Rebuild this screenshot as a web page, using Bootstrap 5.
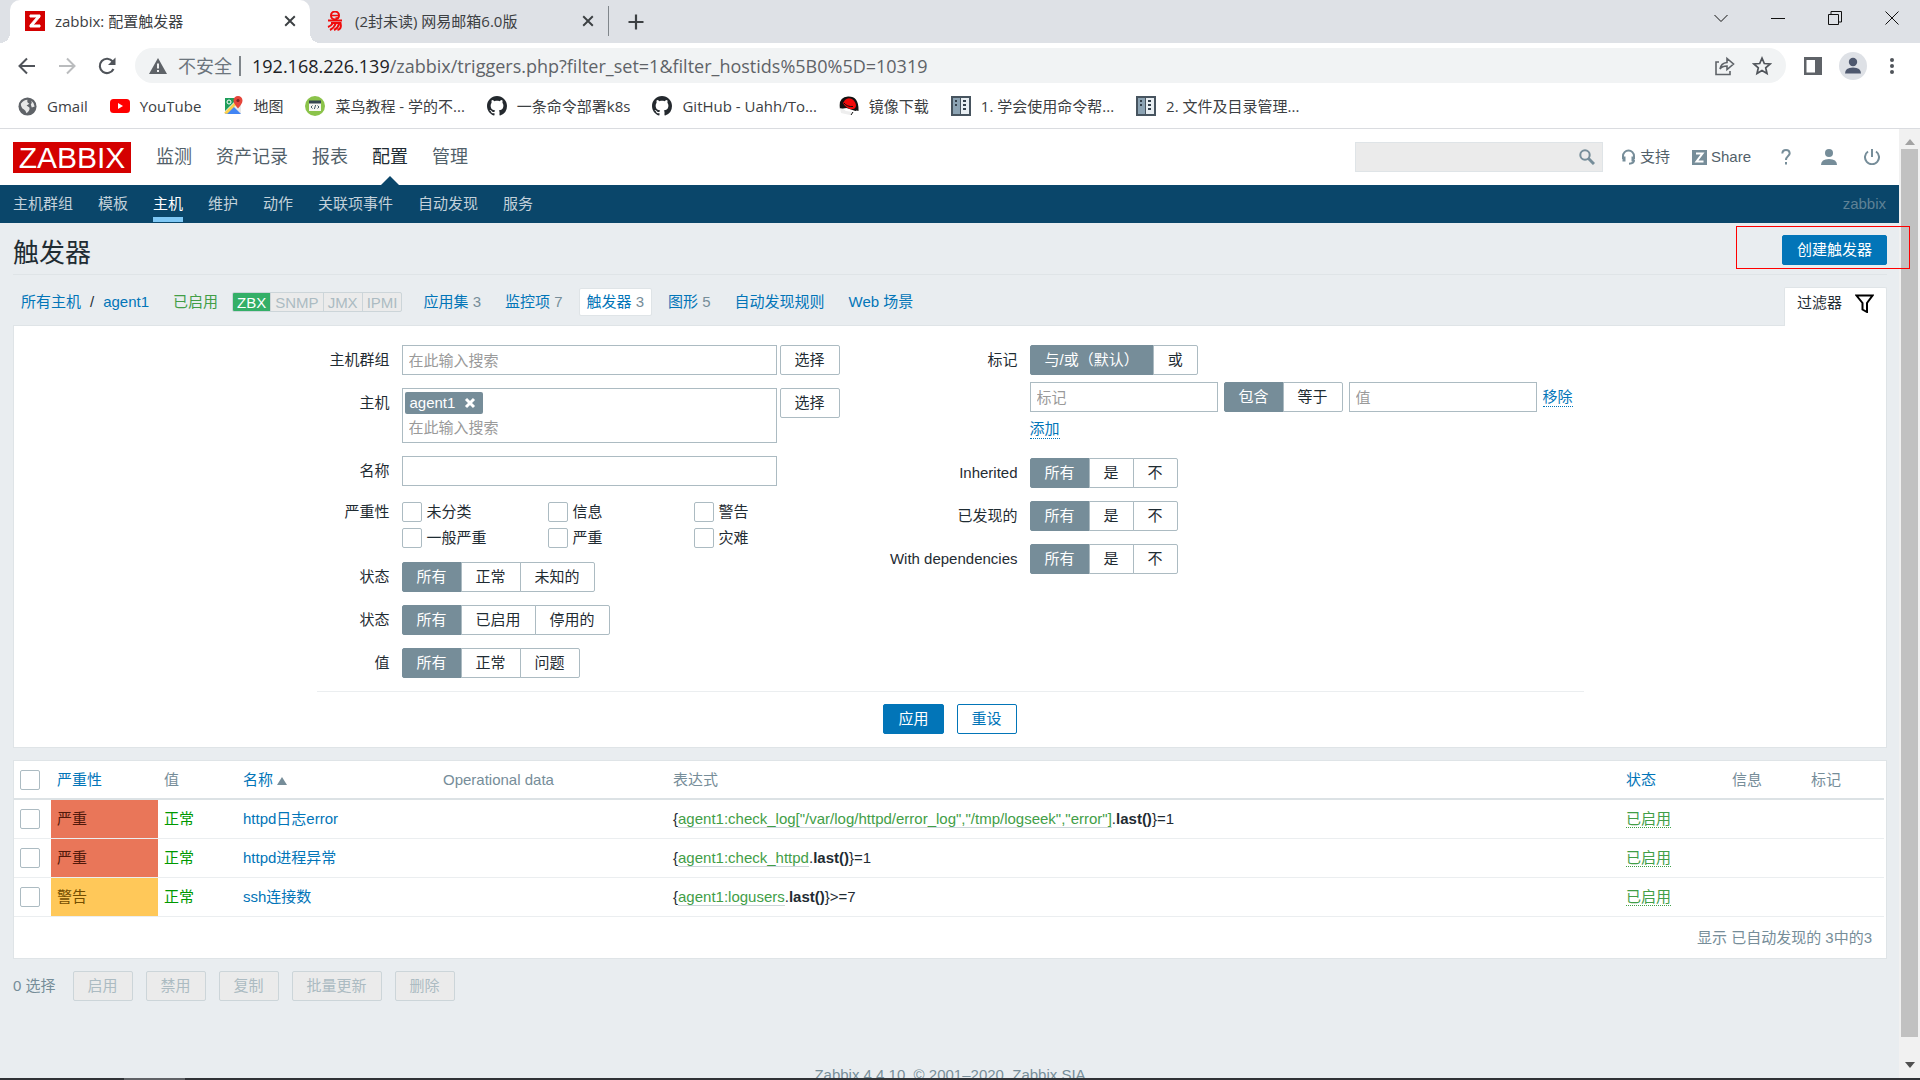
<!DOCTYPE html>
<html lang="zh-CN">
<head>
<meta charset="utf-8">
<meta name="viewport" content="width=device-width, initial-scale=1">
<title>zabbix: 配置触发器</title>
<link href="https://cdn.jsdelivr.net/npm/bootstrap@5.3.0/dist/css/bootstrap.min.css" rel="stylesheet">
<style>
:root{--zlink:#0275b8;--zgrey:#768d99;--zline:#dfe4e7;--zedge:#acbbc2;--zbg:#ebeef0}
body{font-family:"Liberation Sans","Noto Sans CJK SC",sans-serif;font-size:15px;line-height:20px;color:#1f2c33;background:#e9edf0}
a{color:var(--zlink);text-decoration:none}
svg{display:block;flex:none}
.window{height:100vh;overflow:hidden}
.chrome{font-family:"Open Sans","Noto Sans CJK SC",sans-serif;color:#3c4043;background:#fff}
.chrome button,.plain{border:0;background:none;padding:0;display:flex;align-items:center;justify-content:center;color:#3c4043}
.tabstrip{height:43px;background:#dee1e6;padding-left:10px}
.btab{width:300px;height:43px;padding:0 14px 2px 15px;gap:10px}
.btab.on{background:#fff;border-radius:10px 10px 0 0;position:relative}
.btab.on::before,.btab.on::after{content:"";position:absolute;bottom:0;width:10px;height:10px}
.btab.on::before{left:-10px;background:radial-gradient(circle at 0 0,#dee1e6 10px,#fff 10px)}
.btab.on::after{right:-10px;background:radial-gradient(circle at 100% 0,#dee1e6 10px,#fff 10px)}
.tabsep{width:1px;height:30px;background:#80868b;margin-top:6px}
.winbtns button{width:57px;height:36px;color:#111}
.toolbar{height:45px}
.toolbar .nav-i{width:40px}
.omni{height:35px;border-radius:18px;background:#f1f3f4;font-size:18px}
.marks{height:41px;border-bottom:1px solid #dadce0;padding:0 0 4px 18px;gap:22px}
.marks a{color:#3c4043;gap:10px;white-space:nowrap}
.page{min-height:0;overflow:hidden}
.content{min-width:0;position:relative;z-index:1}
.sbar{flex:0 0 21px;background:#f1f1f1;padding:10px 0}
.thumb{width:17px;background:#c1c1c1;flex:0 0 888px}
.topbar{height:56px;background:#fff;padding:0 13px}
.logo{background:#d40000;color:#fff;font-size:30px;line-height:31px;height:31px;width:118px;text-align:center}
.mainnav{gap:24px;font-size:18px;margin-left:25px}
.mainnav a{color:#52616a;line-height:56px;position:relative}
.mainnav a.on{color:#1f2c33}
.mainnav a.on::after{content:"";position:absolute;left:50%;bottom:0;margin-left:-9px;border:9px solid transparent;border-top:0;border-bottom-color:#0a466a}
.search{width:248px;height:30px;background:#ebebeb;border:1px solid #dfe4e7;padding-right:7px}
.search input{border:0;background:none;outline:0;min-width:0}
.tools{color:var(--zgrey)}
.tools a{color:#52616a}
.subnav{height:38px;background:#0a466a;padding:0 13px;gap:25px}
.subnav a{color:#c3d1da;line-height:26px;border-bottom:5px solid transparent;margin-bottom:1px}
.subnav a.on{color:#fff;border-color:#7fc8f5}
.subnav span{color:#5f8296}
.work{padding:0 12px 0 13px}
.headline{height:52px;border-bottom:1px solid var(--zline)}
.headline h1{font-size:26px;line-height:36px;margin:0;padding-top:12px}
.zbtn{height:30px;padding:0 14px;border:1px solid var(--zedge);border-radius:2px;background:#fff;color:#1f2c33;font-size:15px;line-height:28px;white-space:nowrap}
.zbtn.blue{background:var(--zlink);border-color:var(--zlink);color:#fff}
.zbtn.ghost{color:var(--zlink);border-color:var(--zlink)}
.zbtn:disabled{background:#ebebeb;border-color:#ccd5d9;color:#acbbc2}
.callout-box{position:absolute;right:-23px;top:3px;width:174px;height:43px;border:1px solid #f00}
.crumbs{height:50px;padding-left:8px}
.crumbs .hl{background:#fff;border:1px solid var(--zline);border-radius:2px;padding:3px 7px}
.crumbs small{font-size:15px;color:var(--zgrey)}
.ifaces{height:20px;border:1px solid #ccd5d9;border-radius:2px;overflow:hidden;color:#acbbc2;background:#ebebeb;line-height:19px}
.ifaces span{padding:0 4px;border-left:1px solid #ccd5d9}
.ifaces span:first-child{background:#34af67;color:#fff;border:0}
.ftab{height:39px;width:103px;background:#fff;border:1px solid var(--zline);border-bottom:0;margin-bottom:-1px;border-radius:2px 2px 0 0;color:#1f2c33;padding:0 12px;position:relative}
.panel{background:#fff;border:1px solid var(--zline)}
.filter{padding:19px 0 13px}
.fgrid{max-width:1267px}
.fleft{width:560px}
.frow{display:flex;gap:12px}
.frow>.lab{line-height:30px;text-align:right;flex:none;white-space:nowrap}
.fleft .lab{width:73px}
.fright .lab{width:141px}
.fstack{display:flex;flex-direction:column;gap:13px}
.zin{height:30px;border:1px solid var(--zedge);padding:0 6px;background:#fff;outline:0;color:#1f2c33;font-size:15px}
.wide{width:375px}
.mid{width:188px}
input::placeholder{color:#9a9a9a;opacity:1}
.multi{border:1px solid var(--zedge);padding:3px 2px;height:55px}
.multi input{border:0;outline:0;padding:0 4px;height:26px;width:100%}
.chip{background:var(--zgrey);color:#fff;border-radius:2px;height:22px;padding:0 5px;gap:9px;width:78px}
.zseg{display:flex}
.zseg label{border:1px solid var(--zedge);padding:0 14px;line-height:28px;height:30px;background:#fff;margin-left:-1px;cursor:pointer;white-space:nowrap}
.zseg label:first-of-type{margin-left:0;border-radius:2px 0 0 2px}
.zseg label:last-of-type{border-radius:0 2px 2px 0}
.zseg .btn-check:checked+label{background:var(--zgrey);border-color:var(--zgrey);color:#fff}
.sevs{display:grid;grid-template-columns:repeat(3,146px);row-gap:6px;padding:3px 0 1px}
.sevs label{display:flex;gap:5px}
.form-check-input{width:20px;height:20px;margin:0;border:1px solid var(--zedge);border-radius:2px!important;flex:none;display:block}
.dotted{border-bottom:1px dotted currentColor;line-height:18px}
.factions{border-top:1px solid var(--zbg);margin-top:13px;padding-top:12px;gap:13px}
.ztable{table-layout:fixed;margin:0;width:calc(100% - 2px);color:#1f2c33}
.ztable th{font-weight:400;color:var(--zgrey);border-bottom:2px solid #dce2e5;padding:0 6px;height:38px;vertical-align:middle}
.ztable td{padding:0 6px;height:39px;border-bottom:1px solid var(--zbg);white-space:nowrap}
.ztable>:not(caption)>*>*{background-color:transparent;box-shadow:none}
.ztable td.high{background:#e97659;background-clip:padding-box;color:#52190b}
.ztable td.warning{background:#ffc859;background-clip:padding-box;color:#734d00}
.ok{color:#090}
.grn{color:#429e47}
.ztable .item{color:#429e47;border-bottom:1px solid #ccd5d9}
.tfoot-line{height:41px;line-height:41px;padding-right:14px;color:var(--zgrey)}
.bulk{gap:13px;margin-top:12px;color:var(--zgrey)}
.foot{color:var(--zgrey);margin-top:64px;text-align:center;white-space:pre}
.taskbar{height:2px;background:#303236;flex:none;padding-left:124px}
.taskbar i{display:block;width:61px;height:2px;background:#606266}
</style>
<script src="https://cdn.jsdelivr.net/npm/bootstrap@5.3.0/dist/js/bootstrap.bundle.min.js"></script>
</head>
<body>
<svg width="0" height="0" class="position-absolute" aria-hidden="true">
<symbol id="gh" viewBox="0 0 16 16"><path d="M8 0C3.58 0 0 3.58 0 8c0 3.54 2.29 6.53 5.47 7.59.4.07.55-.17.55-.38 0-.19-.01-.82-.01-1.49-2.01.37-2.53-.49-2.69-.94-.09-.23-.48-.94-.82-1.13-.28-.15-.68-.52-.01-.53.63-.01 1.08.58 1.23.82.72 1.21 1.87.87 2.33.66.07-.52.28-.87.51-1.07-1.78-.2-3.64-.89-3.64-3.95 0-.87.31-1.59.82-2.15-.08-.2-.36-1.02.08-2.12 0 0 .67-.21 2.2.82.64-.18 1.32-.27 2-.27s1.36.09 2 .27c1.53-1.04 2.2-.82 2.2-.82.44 1.1.16 1.92.08 2.12.51.56.82 1.27.82 2.15 0 3.07-1.87 3.75-3.65 3.95.29.25.54.73.54 1.48 0 1.07-.01 1.93-.01 2.2 0 .21.15.46.55.38A8.01 8.01 0 0 0 16 8c0-4.42-3.58-8-8-8z" fill="#24292e"/></symbol>
<symbol id="bk" viewBox="0 0 20 20"><path d="M0 0h20v20H0z" fill="#47545f"/><path d="M2 2h7v16H2z" fill="#8ca3b3"/><path d="M10 2h8v16h-8z" fill="#e8eef2"/><path d="M4 4h2v2H4zM4 8h2v2H4zM12 4h3v2h-3zM12 8h3v2h-3zM12 12h3v2h-3z" fill="#34414c"/></symbol>
<symbol id="xx" viewBox="0 0 10 10"><path d="M1 1l8 8M9 1L1 9" stroke="currentColor" stroke-width="1.6"/></symbol>
</svg>
<div class="window d-flex flex-column">
<header class="chrome">
  <div class="tabstrip d-flex">
    <div class="btab on d-flex align-items-center">
      <svg width="20" height="20" viewBox="0 0 20 20"><path d="M0 0h20v20H0z" fill="#d40000"/><path d="M5 4h10v2L8 14h7v2H5v-2l7-8H5z" fill="#fff" stroke="#fff"/></svg>
      <span class="flex-fill">zabbix: 配置触发器</span>
      <button aria-label="关闭"><svg width="12" height="12"><use href="#xx"/></svg></button>
    </div>
    <div class="btab d-flex align-items-center" style="width:298px">
      <svg width="20" height="20" viewBox="0 0 18 20" fill="none" stroke="#f00b0b" stroke-width="2"><circle cx="9" cy="4.500" r="4"/><path d="M6 4.500h6M9.500 7h3" stroke-width="1.400"/><path d="M2 9.500h14M5 12h9.500q1.500 6-3 7M7 12q-2 3-5 4M10 12q-2 5-6 7M13 13q-1 4-5 6"/></svg>
      <span class="flex-fill">(2封未读) 网易邮箱6.0版</span>
      <button aria-label="关闭"><svg width="12" height="12"><use href="#xx"/></svg></button>
    </div>
    <div class="tabsep"></div>
    <button class="ms-3" aria-label="新标签页"><svg width="22" height="22" viewBox="0 0 22 22"><path d="M11 3.500v15M3.500 11h15" stroke="currentColor" stroke-width="2.200"/></svg></button>
    <div class="winbtns d-flex ms-auto">
      <button aria-label="搜索标签页"><svg width="14" height="14" viewBox="0 0 14 14" fill="none" stroke="currentColor"><path d="M.5 4L7 10.500 13.500 4"/></svg></button>
      <button aria-label="最小化"><svg width="14" height="14"><path d="M0 7.500h14" stroke="#111"/></svg></button>
      <button aria-label="还原"><svg width="14" height="14" fill="none" stroke="#111"><path d="M.5 3.500h10v10H.5zM3 3V.5h10.500v10.500H11"/></svg></button>
      <button aria-label="关闭窗口"><svg width="14" height="14"><path d="M.5.5l13 13M13.500.5l-13 13" stroke="#111"/></svg></button>
    </div>
  </div>
  <div class="toolbar d-flex align-items-center" style="padding-left:7px">
    <button class="nav-i" aria-label="后退"><svg width="18" height="18" viewBox="0 0 18 18" fill="none" stroke="#50545a" stroke-width="2"><path d="M17 9H2M9 1.500L1.500 9 9 16.500"/></svg></button>
    <button class="nav-i" aria-label="前进"><svg width="18" height="18" viewBox="0 0 18 18" fill="none" stroke="#babcbe" stroke-width="2"><path d="M1 9h15M9 1.500L16.500 9 9 16.500"/></svg></button>
    <button class="nav-i" aria-label="刷新"><svg width="20" height="20" viewBox="0 0 20 20"><path d="M16.500 13a7.200 7.200 0 1 1-.8-7.500" fill="none" stroke="#50545a" stroke-width="2.100"/><path d="M18.500 1.500V9H11z" fill="#50545a"/></svg></button>
    <div class="omni d-flex align-items-center flex-fill ms-2" style="padding:0 14px">
      <svg width="18" height="16" viewBox="0 0 18 16"><path d="M9 0l9 16H0z" fill="#5f6368"/><path d="M9 5.500v5M9 12v2" stroke="#fff" stroke-width="1.800"/></svg>
      <span class="text-secondary" style="margin-left:11px">不安全</span>
      <span style="width:2px;height:20px;background:#80868b;margin:0 8px 0 7px"></span>
      <span class="flex-fill" style="color:#5f6368;padding-left:3px"><span style="color:#202124">192.168.226.139</span>/zabbix/triggers.php?filter_set=1&amp;filter_hostids%5B0%5D=10319</span>
      <button aria-label="分享" class="me-3"><svg width="22" height="20" viewBox="0 0 22 20" fill="none" stroke="#5f6368" stroke-width="1.600"><path d="M5 6H2v12.500h14V15M6 13q1-6 7-6.500V2.500L19.500 8 13 13.500V10q-5 0-7 3z"/></svg></button>
      <button aria-label="收藏"><svg width="20" height="20" viewBox="0 0 20 20" fill="none" stroke="#50545a" stroke-width="1.700"><path d="M10 2.200l2.300 5.300 5.800.5-4.400 3.800 1.300 5.700-5-3-5 3 1.300-5.700L1.900 8l5.800-.5z"/></svg></button>
    </div>
    <button aria-label="侧边栏" style="margin-left:18px"><svg width="18" height="18"><path d="M0 0h18v18H0zM2.500 3v12.500H11V3z" fill="#5f6368" fill-rule="evenodd"/></svg></button>
    <button aria-label="用户" style="margin-left:17px"><svg width="28" height="28"><circle cx="14" cy="14" r="14" fill="#dee1e6"/><circle cx="14" cy="10" r="4.200" fill="#4e586e"/><path d="M6 21.500q0-6 8-6t8 6z" fill="#4e586e"/></svg></button>
    <button aria-label="菜单" style="margin:0 26px 0 23px"><svg width="4" height="18" fill="#50545a"><circle cx="2" cy="3" r="2"/><circle cx="2" cy="9" r="2"/><circle cx="2" cy="15" r="2"/></svg></button>
  </div>
  <nav class="marks d-flex align-items-center" aria-label="书签">
    <a class="d-flex align-items-center" href="#"><svg width="19" height="19" viewBox="0 0 20 20"><circle cx="10" cy="10" r="9.500" fill="#5f6368"/><path d="M3 7q3-4 7-4-1 3 2 4l-3 2 3 2q1 3-3 6-1-3-3-4-3-2-3-6zM14 4q3 2 3.500 6l-3 1-1-3 1-2z" fill="#fff" opacity=".85"/></svg>Gmail</a>
    <a class="d-flex align-items-center" href="#"><svg width="20" height="20"><rect y="3" width="20" height="14" rx="3.500" fill="#f00"/><path d="M8 7v6l5-3z" fill="#fff"/></svg>YouTube</a>
    <a class="d-flex align-items-center" href="#"><svg width="20" height="20"><path d="M2 2h16v16H2z" fill="#e9e9e9"/><path d="M2 2h13L2 15z" fill="#1e9e5a"/><path d="M2 18l8-8 8 8z" fill="#4285f4"/><path d="M1 17L14 4l2 2L4 18z" fill="#fbd04b"/><path d="M15 0a4.500 4.500 0 0 1 4.500 4.500q0 3-4.500 8-4.500-5-4.500-8A4.500 4.500 0 0 1 15 0z" fill="#e5453a"/><circle cx="15" cy="4.500" r="1.600" fill="#822"/><circle cx="6" cy="6" r="2" fill="none" stroke="#fff"/></svg>地图</a>
    <a class="d-flex align-items-center" href="#"><svg width="20" height="20"><circle cx="10" cy="10" r="10" fill="#8bc34a"/><path d="M4 5h12v10H4z" fill="#f5f5f0"/><path d="M4 4.500h12v3H4z" fill="#37474f"/><path d="M7.500 9.500L6 11l1.500 1.500M12.500 9.500L14 11l-1.500 1.500M10.600 9l-1.200 4" stroke="#455a64" fill="none"/></svg>菜鸟教程 - 学的不...</a>
    <a class="d-flex align-items-center" href="#"><svg width="20" height="20"><use href="#gh"/></svg>一条命令部署k8s</a>
    <a class="d-flex align-items-center" href="#"><svg width="20" height="20"><use href="#gh"/></svg>GitHub - Uahh/To...</a>
    <a class="d-flex align-items-center" href="#"><svg width="20" height="20"><path d="M1 13Q-1 1 9 .5 20 0 19.500 15q-2-1-3 0l-9-3z" fill="#111"/><path d="M6 4q3-3 7-1 4 3 4 7-1 4-6 3-5-2-7-6z" fill="#f00a0a"/><path d="M5 7q3 4 9 3.500" stroke="#111" fill="none"/><path d="M1 12q4 1 6 3l7 1-3 3-9-2z" fill="#eee"/><path d="M12 19l2-3" stroke="#111"/></svg>镜像下载</a>
    <a class="d-flex align-items-center" href="#"><svg width="20" height="20"><use href="#bk"/></svg>1. 学会使用命令帮...</a>
    <a class="d-flex align-items-center" href="#"><svg width="20" height="20"><use href="#bk"/></svg>2. 文件及目录管理...</a>
  </nav>
</header>

<div class="page d-flex flex-fill">
<div class="content flex-fill">
  <div class="topbar d-flex align-items-center">
    <a class="logo" href="#">ZABBIX</a>
    <nav class="mainnav d-flex" aria-label="主菜单"><a href="#">监测</a><a href="#">资产记录</a><a href="#">报表</a><a href="#" class="on">配置</a><a href="#">管理</a></nav>
    <div class="tools d-flex align-items-center ms-auto">
      <div class="search d-flex align-items-center"><input class="flex-fill" type="text" aria-label="搜索"><button class="plain" aria-label="搜索"><svg width="16" height="16" fill="none" stroke="#768d99"><circle cx="6" cy="6" r="4.700" stroke-width="2"/><path d="M9.500 9.500l5.500 5.500" stroke-width="3"/></svg></button></div>
      <a href="#" class="d-flex align-items-center gap-1" style="margin-left:18px"><svg width="15" height="16" fill="none" stroke="#768d99" stroke-width="2"><path d="M2 10V7a5.500 5.500 0 0 1 11 0v3"/><path d="M3 7.500v5M12 7.500v5" stroke-width="3"/><path d="M13 11q0 3.500-5 3.700"/></svg>支持</a>
      <a href="#" class="d-flex align-items-center gap-1" style="margin-left:22px"><svg width="15" height="15"><path d="M0 0h15v15H0z" fill="#768d99"/><path d="M4 3.500h6.500L4.500 11.500h7" stroke="#fff" stroke-width="2" fill="none"/></svg>Share</a>
      <a href="#" aria-label="帮助" style="margin-left:30px"><svg width="10" height="16" fill="none" stroke="#768d99" stroke-width="2"><path d="M1.300 4.500Q1.500 1 5 1t3.700 3.300C8.700 7 5 7 5 11M5 13v2.500"/></svg></a>
      <a href="#" aria-label="用户" style="margin-left:30px"><svg width="16" height="16" fill="#768d99"><circle cx="8" cy="4" r="4"/><path d="M0 16q0-6 8-6t8 6z"/></svg></a>
      <a href="#" aria-label="注销" style="margin:0 6px 0 27px"><svg width="16" height="16" fill="none" stroke="#768d99" stroke-width="2"><path d="M4 2.500a7 7 0 1 0 8 0M8 0v8"/></svg></a>
    </div>
  </div>
  <nav class="subnav d-flex align-items-end" aria-label="配置"><a href="#">主机群组</a><a href="#">模板</a><a href="#" class="on">主机</a><a href="#">维护</a><a href="#">动作</a><a href="#">关联项事件</a><a href="#">自动发现</a><a href="#">服务</a><span class="ms-auto align-self-center">zabbix</span></nav>

  <main class="work">
    <div class="headline d-flex justify-content-between position-relative">
      <h1 class="fw-normal">触发器</h1>
      <button class="zbtn blue" style="margin-top:12px">创建触发器</button>
      <div class="callout-box"></div>
    </div>
    <div class="crumbs d-flex align-items-end">
      <div class="d-flex align-items-center flex-fill" style="height:46px">
        <a href="#">所有主机</a><span style="margin:0 9px">/</span><a href="#">agent1</a>
        <span class="grn" style="margin:0 14px 0 24px">已启用</span>
        <div class="ifaces d-flex"><span>ZBX</span><span>SNMP</span><span>JMX</span><span>IPMI</span></div>
        <a href="#" style="margin:0 24px 0 21px">应用集 <small>3</small></a>
        <a href="#">监控项 <small>7</small></a>
        <a href="#" class="hl" style="margin:0 16px">触发器 <small>3</small></a>
        <a href="#">图形 <small>5</small></a>
        <a href="#" style="margin:0 24px">自动发现规则</a>
        <a href="#">Web 场景</a>
      </div>
      <a href="#" class="ftab d-flex align-items-center justify-content-between pb-2">过滤器<svg width="19" height="19" fill="none" stroke="#000" stroke-width="2"><path d="M1.500 1.500h16L12 9v9l-4.500-2.500V9z"/></svg></a>
    </div>

    <form class="panel filter" onsubmit="return false">
      <div class="fgrid mx-auto">
        <div class="d-flex">
          <div class="fleft fstack">
            <div class="frow"><label class="lab" for="grp">主机群组</label><div class="d-flex" style="gap:3px"><input id="grp" class="zin wide" placeholder="在此输入搜索"><button class="zbtn">选择</button></div></div>
            <div class="frow"><label class="lab" for="hst">主机</label><div class="d-flex" style="gap:3px"><div class="multi wide"><div class="chip d-flex align-items-center"><span>agent1</span><button class="plain text-white" aria-label="移除 agent1"><svg width="12" height="12"><path d="M2 2l8 8M10 2l-8 8" stroke="#fff" stroke-width="3"/></svg></button></div><input id="hst" placeholder="在此输入搜索"></div><button class="zbtn">选择</button></div></div>
            <div class="frow"><label class="lab" for="nam">名称</label><input id="nam" class="zin wide"></div>
            <div class="frow"><span class="lab" style="line-height:26px">严重性</span><div class="sevs">
              <label><input type="checkbox" class="form-check-input">未分类</label><label><input type="checkbox" class="form-check-input">信息</label><label><input type="checkbox" class="form-check-input">警告</label>
              <label><input type="checkbox" class="form-check-input">一般严重</label><label><input type="checkbox" class="form-check-input">严重</label><label><input type="checkbox" class="form-check-input">灾难</label></div></div>
            <div class="frow"><span class="lab">状态</span><div class="zseg"><input class="btn-check" type="radio" name="st" id="st1" checked><label for="st1">所有</label><input class="btn-check" type="radio" name="st" id="st2"><label for="st2">正常</label><input class="btn-check" type="radio" name="st" id="st3"><label for="st3">未知的</label></div></div>
            <div class="frow"><span class="lab">状态</span><div class="zseg"><input class="btn-check" type="radio" name="en" id="en1" checked><label for="en1">所有</label><input class="btn-check" type="radio" name="en" id="en2"><label for="en2">已启用</label><input class="btn-check" type="radio" name="en" id="en3"><label for="en3">停用的</label></div></div>
            <div class="frow"><span class="lab">值</span><div class="zseg"><input class="btn-check" type="radio" name="va" id="va1" checked><label for="va1">所有</label><input class="btn-check" type="radio" name="va" id="va2"><label for="va2">正常</label><input class="btn-check" type="radio" name="va" id="va3"><label for="va3">问题</label></div></div>
          </div>
          <div class="fright fstack flex-fill">
            <div class="frow"><span class="lab">标记</span><div>
              <div class="zseg"><input class="btn-check" type="radio" name="ao" id="ao1" checked><label for="ao1">与/或（默认）</label><input class="btn-check" type="radio" name="ao" id="ao2"><label for="ao2">或</label></div>
              <div class="d-flex align-items-center" style="gap:6px;margin-top:7px"><input class="zin mid" placeholder="标记" aria-label="标记"><div class="zseg"><input class="btn-check" type="radio" name="op" id="op1" checked><label for="op1">包含</label><input class="btn-check" type="radio" name="op" id="op2"><label for="op2">等于</label></div><input class="zin mid" placeholder="值" aria-label="值"><a href="#" class="dotted">移除</a></div>
              <div class="d-flex" style="padding:8px 0 6px"><a href="#" class="dotted">添加</a></div>
            </div></div>
            <div class="frow"><span class="lab">Inherited</span><div class="zseg"><input class="btn-check" type="radio" name="ih" id="ih1" checked><label for="ih1">所有</label><input class="btn-check" type="radio" name="ih" id="ih2"><label for="ih2">是</label><input class="btn-check" type="radio" name="ih" id="ih3"><label for="ih3">不</label></div></div>
            <div class="frow"><span class="lab">已发现的</span><div class="zseg"><input class="btn-check" type="radio" name="di" id="di1" checked><label for="di1">所有</label><input class="btn-check" type="radio" name="di" id="di2"><label for="di2">是</label><input class="btn-check" type="radio" name="di" id="di3"><label for="di3">不</label></div></div>
            <div class="frow"><span class="lab">With dependencies</span><div class="zseg"><input class="btn-check" type="radio" name="de" id="de1" checked><label for="de1">所有</label><input class="btn-check" type="radio" name="de" id="de2"><label for="de2">是</label><input class="btn-check" type="radio" name="de" id="de3"><label for="de3">不</label></div></div>
          </div>
        </div>
        <div class="factions d-flex justify-content-center"><button class="zbtn blue">应用</button><button class="zbtn ghost">重设</button></div>
      </div>
    </form>

    <div class="panel" style="margin-top:12px">
      <table class="table ztable align-middle">
        <colgroup><col style="width:37px"><col style="width:107px"><col style="width:79px"><col style="width:200px"><col style="width:230px"><col><col style="width:106px"><col style="width:79px"><col style="width:79px"></colgroup>
        <thead><tr><th><input type="checkbox" class="form-check-input" aria-label="全选"></th><th><a href="#">严重性</a></th><th>值</th><th><a href="#">名称 <svg class="d-inline" width="10" height="8"><path d="M5 0l5 8H0z" fill="#768d99"/></svg></a></th><th>Operational data</th><th>表达式</th><th><a href="#">状态</a></th><th>信息</th><th>标记</th></tr></thead>
        <tbody>
        <tr><td><input type="checkbox" class="form-check-input" aria-label="选择"></td><td class="high">严重</td><td class="ok">正常</td><td><a href="#">httpd日志error</a></td><td></td><td>{<a href="#" class="item">agent1:check_log["/var/log/httpd/error_log","/tmp/logseek","error"]</a>.<b>last()</b>}=1</td><td><a href="#" class="grn dotted">已启用</a></td><td></td><td></td></tr>
        <tr><td><input type="checkbox" class="form-check-input" aria-label="选择"></td><td class="high">严重</td><td class="ok">正常</td><td><a href="#">httpd进程异常</a></td><td></td><td>{<a href="#" class="item">agent1:check_httpd</a>.<b>last()</b>}=1</td><td><a href="#" class="grn dotted">已启用</a></td><td></td><td></td></tr>
        <tr><td><input type="checkbox" class="form-check-input" aria-label="选择"></td><td class="warning">警告</td><td class="ok">正常</td><td><a href="#">ssh连接数</a></td><td></td><td>{<a href="#" class="item">agent1:logusers</a>.<b>last()</b>}&gt;=7</td><td><a href="#" class="grn dotted">已启用</a></td><td></td><td></td></tr>
        </tbody>
      </table>
      <div class="tfoot-line text-end">显示 已自动发现的 3中的3</div>
    </div>
    <div class="bulk d-flex align-items-center"><span class="me-1">0 选择</span><button class="zbtn" disabled>启用</button><button class="zbtn" disabled>禁用</button><button class="zbtn" disabled>复制</button><button class="zbtn" disabled>批量更新</button><button class="zbtn" disabled>删除</button></div>
    <footer class="foot">Zabbix 4.4.10. © 2001–2020, Zabbix SIA</footer>
  </main>
</div>
<div class="sbar d-flex flex-column align-items-center" aria-hidden="true">
  <svg width="10" height="6" class="mb-1"><path d="M5 0l5 6H0z" fill="#a3a3a3"/></svg>
  <div class="thumb"></div>
  <svg width="10" height="6" class="mt-auto"><path d="M0 0h10L5 6z" fill="#505050"/></svg>
</div>
</div>
<div class="taskbar"><i></i></div>
</div>
</body>
</html>
